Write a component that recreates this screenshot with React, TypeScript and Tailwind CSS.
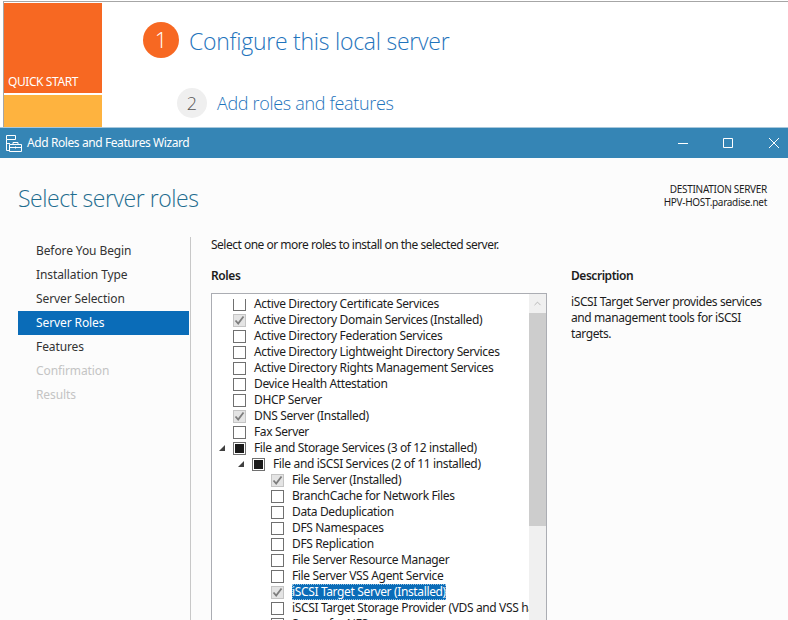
import { ChevronUp } from 'lucide-react';

type Role = {
  label: string;
  level: 0 | 1 | 2;
  state?: 'empty' | 'checked' | 'partial';
  expander?: boolean;
  selected?: boolean;
};

const steps = ['Before You Begin', 'Installation Type', 'Server Selection', 'Server Roles', 'Features', 'Confirmation', 'Results'];

const roles: Role[] = [
  { label: 'Active Directory Certificate Services', level: 0 },
  { label: 'Active Directory Domain Services (Installed)', level: 0, state: 'checked' },
  { label: 'Active Directory Federation Services', level: 0 },
  { label: 'Active Directory Lightweight Directory Services', level: 0 },
  { label: 'Active Directory Rights Management Services', level: 0 },
  { label: 'Device Health Attestation', level: 0 },
  { label: 'DHCP Server', level: 0 },
  { label: 'DNS Server (Installed)', level: 0, state: 'checked' },
  { label: 'Fax Server', level: 0 },
  { label: 'File and Storage Services (3 of 12 installed)', level: 0, state: 'partial', expander: true },
  { label: 'File and iSCSI Services (2 of 11 installed)', level: 1, state: 'partial', expander: true },
  { label: 'File Server (Installed)', level: 2, state: 'checked' },
  { label: 'BranchCache for Network Files', level: 2 },
  { label: 'Data Deduplication', level: 2 },
  { label: 'DFS Namespaces', level: 2 },
  { label: 'DFS Replication', level: 2 },
  { label: 'File Server Resource Manager', level: 2 },
  { label: 'File Server VSS Agent Service', level: 2 },
  { label: 'iSCSI Target Server (Installed)', level: 2, state: 'checked', selected: true },
  { label: 'iSCSI Target Storage Provider (VDS and VSS hardware providers)', level: 2 },
  { label: 'Server for NFS', level: 2 },
];

const indent = ['pl-[2px]', 'pl-[21px]', 'pl-[40px]'];

const RoleRow = ({ role }: { role: Role }) => (
  <div className={`flex h-4 shrink-0 items-center whitespace-nowrap ${indent[role.level]}`}>
    <span className="flex w-[19px] shrink-0 items-center pl-[5px]">
      {role.expander && (
        <svg width="6" height="6" viewBox="0 0 6 6">
          <path d="M6 0V6H0Z" fill="#404040" />
        </svg>
      )}
    </span>
    <span
      className={`flex h-[13px] w-[13px] shrink-0 items-center justify-center border border-[#707070] ${
        role.state === 'checked' ? 'border-[#c4c4c4] bg-[#e4e4e4]' : 'bg-white'
      }`}
    >
      {role.state === 'partial' && <span className="h-[9px] w-[9px] bg-[#1a1a1a]" />}
      {role.state === 'checked' && (
        <svg width="11" height="11" viewBox="0 0 11 11">
          <path d="M1.5 5.5L4.2 8.6L9.5 1.5" fill="none" stroke="#7d7d7d" strokeWidth="1.8" />
        </svg>
      )}
    </span>
    <span
      className={`ml-[8px] h-4 leading-4 tracking-[-0.36px] ${
        role.selected ? 'bg-[#0a6cb8] text-white outline-1 -outline-offset-1 outline-dotted outline-[#8fbfe0]' : 'text-[#1c1c1c]'
      }`}
    >
      {role.label}
    </span>
  </div>
);

export default function App() {
  return (
    <div className="flex h-[620px] w-[788px] flex-col overflow-hidden bg-white font-['Noto_Sans','Open_Sans',sans-serif] text-xs">
      {/* Server Manager behind the wizard */}
      <div className="flex h-[127px] shrink-0 pl-[3px] pt-[1px]">
        <div className="flex h-full w-full border-l border-t border-[#a6a6a6] pt-[1px]">
          <div className="flex w-[98px] shrink-0 flex-col gap-[2px]">
            <div className="flex h-[90px] shrink-0 items-end bg-[#f76822] pb-[3px] pl-1 text-xs tracking-[-0.42px] text-white">
              QUICK START
            </div>
            <div className="flex-1 bg-[#feb33f]" />
          </div>
          <div className="flex flex-col">
            <div className="ml-[41px] mt-[18px] flex items-center gap-[10px]">
              <span className="flex h-9 w-9 items-center justify-center rounded-full bg-[#f76822] font-['Open_Sans',sans-serif] text-[22px] font-light text-white">
                1
              </span>
              <span className="pt-[2px] font-['Open_Sans',sans-serif] text-[23px] leading-9 font-light tracking-[-0.25px] text-[#1f74bc]">
                Configure this local server
              </span>
            </div>
            <div className="ml-[75px] mt-[29px] flex items-center gap-[10px]">
              <span className="flex h-[30px] w-[30px] items-center justify-center rounded-full bg-[#efefef] font-['Open_Sans',sans-serif] text-[18px] font-light text-[#555555]">
                2
              </span>
              <span className="font-['Open_Sans',sans-serif] text-lg leading-[30px] font-light tracking-[-0.33px] text-[#1f74bc]">
                Add roles and features
              </span>
            </div>
          </div>
        </div>
      </div>

      {/* Wizard window */}
      <div className="flex h-[31px] shrink-0 items-center border-t border-[#a8c8dc] bg-[#3585b5] pl-[6px] text-white">
        <svg width="16" height="17" viewBox="0 0 16 17" fill="none" stroke="white" strokeWidth="1">
          <path d="M0.5 0.5H9.5V4.5H0.5ZM0.5 4.5V15.5H3M0.5 8.5H4" />
          <path d="M3.5 9.5H15.5V16.5H3.5ZM7 9.5V7.5H12V9.5M3.5 12.5H15.5M9.5 11.5V13.5" />
        </svg>
        <span className="ml-[5px] tracking-[-0.41px]">Add Roles and Features Wizard</span>
        <div className="ml-auto flex items-center pr-[9px]">
          <svg width="10" height="10" viewBox="0 0 10 10" stroke="white" strokeWidth="1">
            <path d="M0 5.5H10" />
          </svg>
          <svg className="ml-[35px]" width="10" height="10" viewBox="0 0 10 10" fill="none" stroke="white" strokeWidth="1">
            <path d="M0.5 0.5H9.5V9.5H0.5Z" />
          </svg>
          <svg className="ml-[36px]" width="10" height="10" viewBox="0 0 10 10" fill="none" stroke="white" strokeWidth="1">
            <path d="M0 0L10 10M10 0L0 10" />
          </svg>
        </div>
      </div>

      <div className="flex min-h-0 flex-1 flex-col bg-[#fcfcfc] text-[#1c1c1c]">
        <div className="flex h-[79px] shrink-0 justify-between pl-[18px] pr-[21px] pt-[24px]">
          <h1 className="font-['Open_Sans',sans-serif] text-[23px] leading-8 font-light tracking-[-0.45px] text-[#1f6d8f]">
            Select server roles
          </h1>
          <div className="pt-[1px] text-right text-[10px] leading-[13px] tracking-[-0.3px]">
            <div>DESTINATION SERVER</div>
            <div>HPV-HOST.paradise.net</div>
          </div>
        </div>

        <div className="flex min-h-0 flex-1 pl-[18px]">
          <nav className="flex w-[172px] shrink-0 flex-col pr-px pt-[2px]">
            {steps.map((step, i) => (
              <div
                key={step}
                className={`flex h-6 items-center pl-[18px] tracking-[-0.1px] ${
                  step === 'Server Roles' ? 'bg-[#0a6cb8] text-white' : i > 4 ? 'text-[#c4c4c4]' : 'text-[#333333]'
                }`}
              >
                {step}
              </div>
            ))}
          </nav>
          <div className="w-px shrink-0 bg-[#c8c8c8]" />

          <div className="flex min-w-0 flex-1 flex-col pl-[20px]">
            <div className="h-4 leading-4 tracking-[-0.5px]">Select one or more roles to install on the selected server.</div>
            <div className="flex min-h-0 flex-1 gap-[24px]">
              <div className="flex w-[336px] shrink-0 flex-col">
                <div className="mt-[15px] h-4 leading-4 font-semibold tracking-[-0.4px]">Roles</div>
                <div className="mt-[9px] flex min-h-0 flex-1 border border-b-0 border-[#abadb3] bg-white">
                  <div className="flex min-w-0 flex-1 flex-col overflow-hidden pt-[5px]">
                    <div className="flex min-h-0 flex-1 flex-col overflow-hidden">
                      <div className="-mt-[3px] flex flex-col">
                        {roles.map((role) => (
                          <RoleRow key={role.label} role={role} />
                        ))}
                      </div>
                    </div>
                  </div>
                  <div className="flex w-[17px] shrink-0 flex-col bg-[#f0f0f0]">
                    <div className="flex h-[19px] items-center justify-center">
                      <ChevronUp size={11} strokeWidth={1.5} className="text-[#a0a0a0]" />
                    </div>
                    <div className="h-[213px] bg-[#cdcdcd]" />
                  </div>
                </div>
              </div>

              <div className="flex-1">
                <div className="mt-[15px] h-4 leading-4 font-semibold tracking-[-0.46px]">Description</div>
                <p className="mt-[10px] leading-4 tracking-[-0.4px]">
                  iSCSI Target Server provides services
                  <br />
                  and management tools for iSCSI
                  <br />
                  targets.
                </p>
              </div>
            </div>
          </div>
        </div>
      </div>
    </div>
  );
}
